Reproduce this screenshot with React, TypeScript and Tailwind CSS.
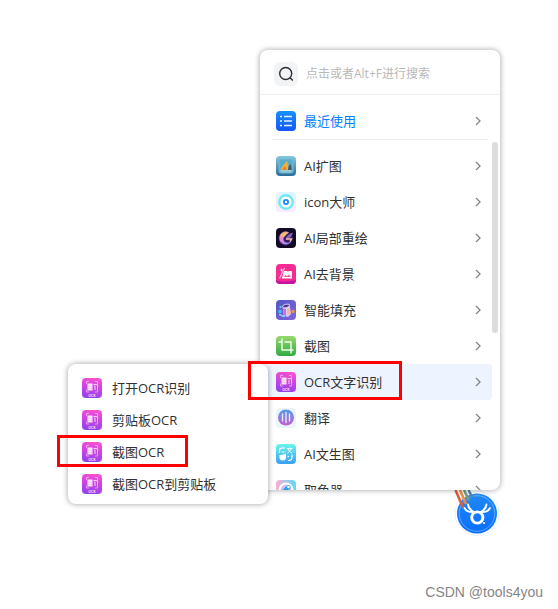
import React from 'react';

const AiExpandIcon: React.FC = () => (
  <svg viewBox="0 0 20 20" className="size-5 shrink-0">
    <defs>
      <linearGradient id="expand-bg" x1="0" y1="0" x2="0" y2="1">
        <stop offset="0" stopColor="#84c8dd" />
        <stop offset="1" stopColor="#286d9c" />
      </linearGradient>
    </defs>
    <rect width="20" height="20" rx="4" fill="url(#expand-bg)" />
    <rect x="3" y="3" width="14" height="14" rx="1.5" fill="#58abc9" stroke="#8ccbdd" strokeWidth="0.6" />
    <path d="M4 15c0-4 3-6 4-7 2-1 2-3 3-4 1 4 4 6 5 11z" fill="#84b4ae" />
    <path d="M5.5 14.5c0-4 2.500-4 4.500-9.500 1.500 3 2.500 5 2 8l-2 2z" fill="#f9ae2c" />
    <path d="M6.500 14l2.500-4 1.500 4.500z" fill="#f46f2d" />
    <path d="M12 14c0-3 1-5 2-6 1.500 2 2 4 1.500 6z" fill="#405e70" />
    <path d="M4 14.500c3-1 8-1 12 0l-1 2H5z" fill="#9acbd4" />
  </svg>
);

const IconMasterIcon: React.FC = () => (
  <svg viewBox="0 0 20 20" className="size-5 shrink-0">
    <defs>
      <linearGradient id="master-bg" x1="0" y1="0" x2="0" y2="1">
        <stop offset="0" stopColor="#dcf7ff" />
        <stop offset="1" stopColor="#faeaff" />
      </linearGradient>
    </defs>
    <rect width="20" height="20" rx="4" fill="url(#master-bg)" />
    <circle cx="10" cy="10" r="6.7" fill="#fff" stroke="#70e7f1" strokeWidth="2.4" />
    <circle cx="10" cy="10" r="2.1" fill="#fff" stroke="#168aff" strokeWidth="1.8" />
  </svg>
);

const RepaintIcon: React.FC = () => (
  <svg viewBox="0 0 20 20" className="size-5 shrink-0">
    <defs>
      <linearGradient id="repaint-arc" x1="0.2" y1="0" x2="0.6" y2="1">
        <stop offset="0" stopColor="#f2b06d" />
        <stop offset="0.5" stopColor="#e389d6" />
        <stop offset="1" stopColor="#9c86ff" />
      </linearGradient>
    </defs>
    <rect width="20" height="20" rx="4" fill="#130b26" />
    <circle cx="9.5" cy="10.5" r="7.2" fill="#36205f" />
    <path d="M13 4.500A6.500 6.500 0 1 0 15.500 13c-2 2-6 2.500-7.500 0-1.500-3 .5-6.500 5-8.500z" fill="url(#repaint-arc)" />
    <path d="M4.500 8c1.500-3.500 5-4.500 8-3.500L8 9z" fill="#f8b877" />
    <path d="M9.500 11.500c1-3 3-5.500 7.500-7-1 3-3 5.500-6 7.500z" fill="#8861c5" />
    <path d="M10 11h5.500l-1.500 2.500" fill="none" stroke="#f1b69a" strokeWidth="1.500" />
  </svg>
);

const CutoutIcon: React.FC = () => (
  <svg viewBox="0 0 20 20" className="size-5 shrink-0">
    <rect width="20" height="20" rx="4" fill="#f52c91" />
    <path d="M0 16c3 1.500 7 2 10 1.500S17 16.500 20 16a4 4 0 0 1-4 4H4a4 4 0 0 1-4-4z" fill="#c412a4" />
    <path d="M8 7h3l1 .8L13 7h2a1 1 0 0 1 1 1v6.500H5.800z" fill="#fff" />
    <path d="M3.500 14.500L8.500 4" stroke="#ffc5e3" strokeWidth="1.100" />
    <path d="M5.500 4l.6 1.400 1.400.6-1.400.6-.6 1.400-.6-1.400L3.500 6l1.400-.6z" fill="#ffd5ea" />
    <path d="M7.500 13l2-2 1.500 1 2-1.500 1.800 2.500z" fill="#f75aaa" />
  </svg>
);

const SmartFillIcon: React.FC = () => (
  <svg viewBox="0 0 20 20" className="size-5 shrink-0">
    <defs>
      <linearGradient id="fill-bg" x1="0" y1="0" x2="1" y2="1">
        <stop offset="0" stopColor="#4d58c5" />
        <stop offset="1" stopColor="#8563da" />
      </linearGradient>
    </defs>
    <rect width="20" height="20" rx="4" fill="url(#fill-bg)" />
    <path d="M6.500 6l7-2 1.500 10-3 3-4.500-1.500z" fill="#ddcdfa" />
    <path d="M7 8l3 1v7l-2.500-1z" fill="#c773d4" />
    <path d="M11 9l3-1 .5 5.500-3.500 2z" fill="#f3b7a0" />
    <ellipse cx="10" cy="6" rx="3.500" ry="1.700" transform="rotate(-14 10 6)" fill="#4a338f" stroke="#efe7ff" strokeWidth="0.8" />
    <circle cx="4" cy="11.500" r="1.900" fill="#45b8f0" />
    <circle cx="17" cy="11.500" r="1.700" fill="#f99143" />
    <circle cx="4.500" cy="7" r="1" fill="#6ee1f6" />
    <path d="M3 14.500c2 0 3 2 6 2" stroke="#8fd0fa" strokeWidth="1.600" fill="none" />
  </svg>
);

const ScreenshotIcon: React.FC = () => (
  <svg viewBox="0 0 20 20" className="size-5 shrink-0">
    <defs>
      <linearGradient id="shot-bg" x1="0" y1="0" x2="0" y2="1">
        <stop offset="0" stopColor="#96d96e" />
        <stop offset="1" stopColor="#31aa42" />
      </linearGradient>
    </defs>
    <rect width="20" height="20" rx="4" fill="url(#shot-bg)" />
    <path d="M6 2.500V14h11.500M2.500 6H6M8.500 6H15v8M15 14v3.500" fill="none" stroke="#f4fff1" strokeWidth="1.400" />
  </svg>
);

const OcrIcon: React.FC = () => (
  <svg viewBox="0 0 20 20" className="size-5 shrink-0">
    <defs>
      <linearGradient id="ocr-bg" x1="0.6" y1="0" x2="0.4" y2="1">
        <stop offset="0" stopColor="#f84fd0" />
        <stop offset="1" stopColor="#9440ef" />
      </linearGradient>
    </defs>
    <rect width="20" height="20" rx="4" fill="url(#ocr-bg)" />
    <path d="M4.500 6V3.500H7M13 3.500h2.500V6M4.500 11.500V14H7M13 14h2.500v-2.500" fill="none" stroke="#ffb0f1" strokeWidth="0.8" />
    <path d="M5.500 5.500h5v7h-5z" fill="#ffe3fa" />
    <path d="M5.500 8h5M5.500 10.500h5" stroke="#f3a5e4" strokeWidth="0.500" />
    <path d="M11.500 6.500h4v5M13 7.500v4.500" fill="none" stroke="#ffd0f6" strokeWidth="1" />
    <text x="10" y="18.500" textAnchor="middle" fontSize="3.5" fontWeight="700" fill="#fbd9ff" className="font-['Open_Sans',sans-serif]">OCR</text>
  </svg>
);

const TranslateIcon: React.FC = () => (
  <svg viewBox="0 0 20 20" className="size-5 shrink-0">
    <defs>
      <linearGradient id="translate-disc" x1="0" y1="0" x2="0" y2="1">
        <stop offset="0" stopColor="#4f9bea" />
        <stop offset="1" stopColor="#c85fd0" />
      </linearGradient>
    </defs>
    <rect width="20" height="20" rx="4" fill="#e9f4fb" />
    <circle cx="10" cy="9.500" r="8" fill="url(#translate-disc)" />
    <path d="M6.500 6v7M10 4.500v10M13.500 6v7" stroke="#ebe8ff" strokeWidth="1.400" strokeLinecap="round" />
  </svg>
);

const TextToImageIcon: React.FC = () => (
  <svg viewBox="0 0 20 20" className="size-5 shrink-0">
    <defs>
      <linearGradient id="t2i-bg" x1="0" y1="0" x2="0" y2="1">
        <stop offset="0" stopColor="#6cf5ea" />
        <stop offset="1" stopColor="#399ff3" />
      </linearGradient>
    </defs>
    <rect width="20" height="20" rx="4" fill="url(#t2i-bg)" />
    <path d="M3.500 8.500V6.500c0-2 1-2.500 3-2.500h2M16 11v2c0 2-1 3.500-3.500 3.500" fill="none" stroke="#fff" strokeWidth="1.200" strokeLinecap="round" />
    <path d="M3.500 11c2 0 4-.5 6.500-1.500v4c0 2-1.300 3-3.200 3-2 0-3.300-1.300-3.300-3z" fill="#fff" />
    <path d="M11 4.500h5.500M13.700 3.500v1M11.500 9c2-1 3-2.500 3.500-4.500M12 5c.5 1.500 2 3.300 4 4" fill="none" stroke="#fff" strokeWidth="0.900" />
    <path d="M5.500 8h3M11.500 12.500h1.500" stroke="#fff" strokeWidth="1" />
  </svg>
);

const ColorPickerIcon: React.FC = () => (
  <svg viewBox="0 0 20 20" className="size-5 shrink-0">
    <defs>
      <linearGradient id="picker-bg" x1="0" y1="0" x2="1" y2="0">
        <stop offset="0" stopColor="#ffadd0" />
        <stop offset="1" stopColor="#5adcfa" />
      </linearGradient>
    </defs>
    <rect width="20" height="20" rx="4" fill="url(#picker-bg)" />
    <circle cx="10" cy="10" r="6.500" fill="#c9c3ee" stroke="#fff" strokeWidth="2.200" />
    <path d="M9 10.500l3.500-3.500" stroke="#2f9df0" strokeWidth="4" strokeLinecap="round" />
    <circle cx="12.500" cy="7" r="1.300" fill="#fff" />
  </svg>
);

const RecentIcon: React.FC = () => (
  <svg viewBox="0 0 20 20" className="size-5 shrink-0">
    <defs>
      <linearGradient id="recent-bg" x1="0" y1="0" x2="0" y2="1">
        <stop offset="0" stopColor="#1690ff" />
        <stop offset="1" stopColor="#1256fa" />
      </linearGradient>
    </defs>
    <rect width="20" height="20" rx="4" fill="url(#recent-bg)" />
    <path d="M4 5.500h2M4 10h2M4 14.500h2M8 5.500h8M8 10h8M8 14.500h8" stroke="#e8f3ff" strokeWidth="1.400" />
  </svg>
);

const SearchIcon: React.FC = () => (
  <svg viewBox="0 0 24 24" className="size-6 shrink-0">
    <rect width="24" height="24" rx="6" fill="#f2f3f5" />
    <circle cx="11.700" cy="11.500" r="6" fill="none" stroke="#2b2d30" strokeWidth="1.400" />
    <path d="M15.800 15.600l3 3" stroke="#2b2d30" strokeWidth="1.400" />
  </svg>
);

const Chevron: React.FC = () => (
  <svg viewBox="0 0 6 10" className="ml-auto h-[10px] w-[6px] shrink-0">
    <path d="M1 1l4 4-4 4" fill="none" stroke="#858585" strokeWidth="1.300" />
  </svg>
);

const DeerBall: React.FC = () => (
  <svg viewBox="0 0 48 48" className="size-12">
    <defs>
      <linearGradient id="ball-bg" x1="0" y1="0" x2="0" y2="1">
        <stop offset="0" stopColor="#2189f6" />
        <stop offset="1" stopColor="#0b6dff" />
      </linearGradient>
    </defs>
    <circle cx="24" cy="23.500" r="22" fill="#fff" stroke="#e6f2ff" strokeWidth="1" />
    <circle cx="24" cy="23.500" r="20" fill="url(#ball-bg)" />
    <circle cx="24" cy="23.500" r="17.800" fill="none" stroke="#6eb4ff" strokeWidth="0.8" />
    <path d="M15.500 0l3.500 7" stroke="#4f86ad" strokeWidth="2.600" />
    <path d="M11 0l5 10.500" stroke="#6e9d85" strokeWidth="2.600" />
    <path d="M7 0l6 14" stroke="#ee8b4b" strokeWidth="2.600" />
    <path d="M2.500 0l7.500 17.500" stroke="#d95c3f" strokeWidth="2.600" />
    <path d="M11.500 18c2 3.500 6 4.500 10 4M37 18c-2 3.500-6 4.500-10 4M15 14.500c.5 3.500 2.500 6 6 7.500M33.500 14.500c-.5 3.500-2.500 6-6 7.500" fill="none" stroke="#fff" strokeWidth="1.900" strokeLinecap="round" />
    <circle cx="24.300" cy="27.500" r="5.600" fill="none" stroke="#fff" strokeWidth="2.900" />
    <circle cx="31" cy="33" r="1.100" fill="#fff" />
  </svg>
);

const tools = [
  { name: 'AI扩图', Icon: AiExpandIcon },
  { name: 'icon大师', Icon: IconMasterIcon },
  { name: 'AI局部重绘', Icon: RepaintIcon },
  { name: 'AI去背景', Icon: CutoutIcon },
  { name: '智能填充', Icon: SmartFillIcon },
  { name: '截图', Icon: ScreenshotIcon },
  { name: 'OCR文字识别', Icon: OcrIcon, active: true },
  { name: '翻译', Icon: TranslateIcon },
  { name: 'AI文生图', Icon: TextToImageIcon },
  { name: '取色器', Icon: ColorPickerIcon },
];

const ocrActions = ['打开OCR识别', '剪贴板OCR', '截图OCR', '截图OCR到剪贴板'];

const App: React.FC = () => {
  return (
    <main className="min-h-screen overflow-hidden bg-white pt-[50px] font-['Open_Sans','Noto_Sans_CJK_SC',sans-serif] text-[13px] leading-5 text-[#303133]">
      <div className="relative mr-[58px] ml-auto w-60">
        {/* Floating assistant, tucked under the menu */}
        <button type="button" aria-label="助手" className="absolute top-full right-0 -mr-px">
          <DeerBall />
        </button>

        {/* Tool menu */}
        <section className="relative overflow-hidden rounded-lg bg-white shadow-[0_0_5px_1px_rgba(0,0,0,0.28)]">
          <label className="flex h-[45px] items-center gap-2 border-b border-[#efefef] px-3.5 pt-1">
            <SearchIcon />
            <input
              type="text"
              aria-label="搜索"
              placeholder="点击或者Alt+F进行搜索"
              className="min-w-0 flex-1 text-xs leading-5 outline-none placeholder:text-[#b8b8b8]"
            />
          </label>
          <div className="px-3">
            <button type="button" className="flex h-[45px] w-full items-center gap-2 border-b border-[#f0f0f0] pt-2 pr-[7px] pl-1 text-[#0080ff]">
              <RecentIcon />
              <span>最近使用</span>
              <Chevron />
            </button>
          </div>
          <div className="relative max-h-[350px] overflow-hidden px-2 pt-2">
            <ul>
              {tools.map(({ name, Icon, active }) => (
                <li key={name}>
                  <button
                    type="button"
                    className={`flex h-9 w-full items-center gap-2 rounded pr-[11px] pl-2 ${active ? 'bg-[#edf3ff]' : ''}`}
                  >
                    <Icon />
                    <span>{name}</span>
                    <Chevron />
                  </button>
                </li>
              ))}
            </ul>
            <div className="absolute top-0.5 right-0.5 h-[191px] w-1.5 rounded-full bg-[#dcdddf]" />
          </div>
        </section>

        {/* OCR submenu */}
        <section className="absolute top-[314px] right-[232px] w-[200px] rounded-lg bg-white pt-2 pb-1 shadow-[0_0_5px_1px_rgba(0,0,0,0.28)]">
          <ul>
            {ocrActions.map((action) => (
              <li key={action}>
                <button type="button" className="flex h-8 w-full items-center gap-2.5 px-3.5">
                  <OcrIcon />
                  <span>{action}</span>
                </button>
              </li>
            ))}
          </ul>
          <div className="pointer-events-none absolute top-[71px] -left-[11px] h-8 w-[131px] border-3 border-[#ff0000]" />
        </section>
        <div className="pointer-events-none absolute top-[311px] -left-3 h-[39px] w-[154px] border-3 border-[#ff0000]" />
      </div>

      <footer className="mt-[92px] pr-[15px] text-right font-['Liberation_Sans',sans-serif] text-sm text-[#858585]">
        CSDN @tools4you
      </footer>
    </main>
  );
};

export default App;
